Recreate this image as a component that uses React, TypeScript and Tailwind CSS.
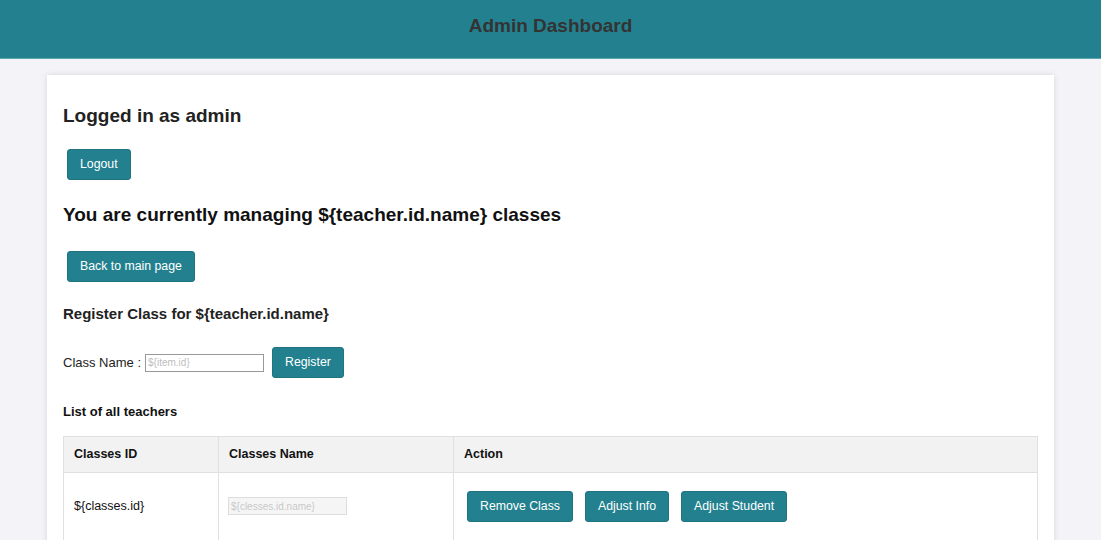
import React from "react";

const btn =
  "bg-[#23818f] text-white text-[12.3px] leading-none rounded-[3px] border border-[#1f7480] px-[12px] h-[31px] flex items-center";

export default function App() {
  return (
    <div className="min-h-[540px] bg-[#f4f4f8] font-['Liberation_Sans',Arial,sans-serif] text-[#111]">
      <header className="h-[59px] bg-[#23818f] border-b border-[#5aa6b1] flex items-center justify-center">
        <h1 className="text-[19px] font-bold text-[#333] -mt-[5px]">Admin Dashboard</h1>
      </header>
      <div className="px-[47px] pt-[16px]">
        <div className="bg-white shadow-[0_0_6px_rgba(0,0,0,0.12)] px-[16px] pt-[29px] pb-[20px]">
          <h2 className="text-[19px] font-bold text-[#222] leading-[24px]">Logged in as admin</h2>
          <div className="mt-[21px] pl-[4px]">
            <button className={btn}>Logout</button>
          </div>
          <h2 className="mt-[23px] text-[19px] font-bold text-[#111] leading-[24px]">
            You are currently managing {"${teacher.id.name}"} classes
          </h2>
          <div className="mt-[24px] pl-[4px]">
            <button className={btn}>Back to main page</button>
          </div>
          <h3 className="mt-[22px] text-[15px] font-bold text-[#222] leading-[20px]">
            Register Class for {"${teacher.id.name}"}
          </h3>
          <div className="mt-[23px] flex items-center text-[13px] text-[#222]">
            <span>Class Name :</span>
            <input
              className="ml-[4px] w-[119px] h-[18px] border border-[#999] text-[10px] text-[#777] px-[2px]"
              placeholder="${item.id}"
            />
            <button className={btn + " ml-[8px]"}>Register</button>
          </div>
          <h4 className="mt-[24px] text-[13px] font-bold text-[#111]">List of all teachers</h4>
          <table className="mt-[14px] w-full border-collapse text-[12.5px]">
            <thead>
              <tr className="bg-[#f2f2f2] h-[36px]">
                <th className="w-[155px] border border-[#e0e0e0] text-left font-bold px-[10px]">Classes ID</th>
                <th className="w-[235px] border border-[#e0e0e0] text-left font-bold px-[10px]">Classes Name</th>
                <th className="border border-[#e0e0e0] text-left font-bold px-[10px]">Action</th>
              </tr>
            </thead>
            <tbody>
              <tr className="h-[68px]">
                <td className="border border-[#e0e0e0] px-[10px]">{"${classes.id}"}</td>
                <td className="border border-[#e0e0e0] px-[9px]">
                  <input
                    disabled
                    className="w-[119px] h-[18px] bg-[#f5f5f5] border border-[#ddd] text-[10px] text-[#999] px-[2px]"
                    placeholder="${clesses.id.name}"
                  />
                </td>
                <td className="border border-[#e0e0e0] pl-[13px]">
                  <div className="flex gap-[12px]">
                    <button className={btn}>Remove Class</button>
                    <button className={btn}>Adjust Info</button>
                    <button className={btn}>Adjust Student</button>
                  </div>
                </td>
              </tr>
            </tbody>
          </table>
        </div>
      </div>
    </div>
  );
}
